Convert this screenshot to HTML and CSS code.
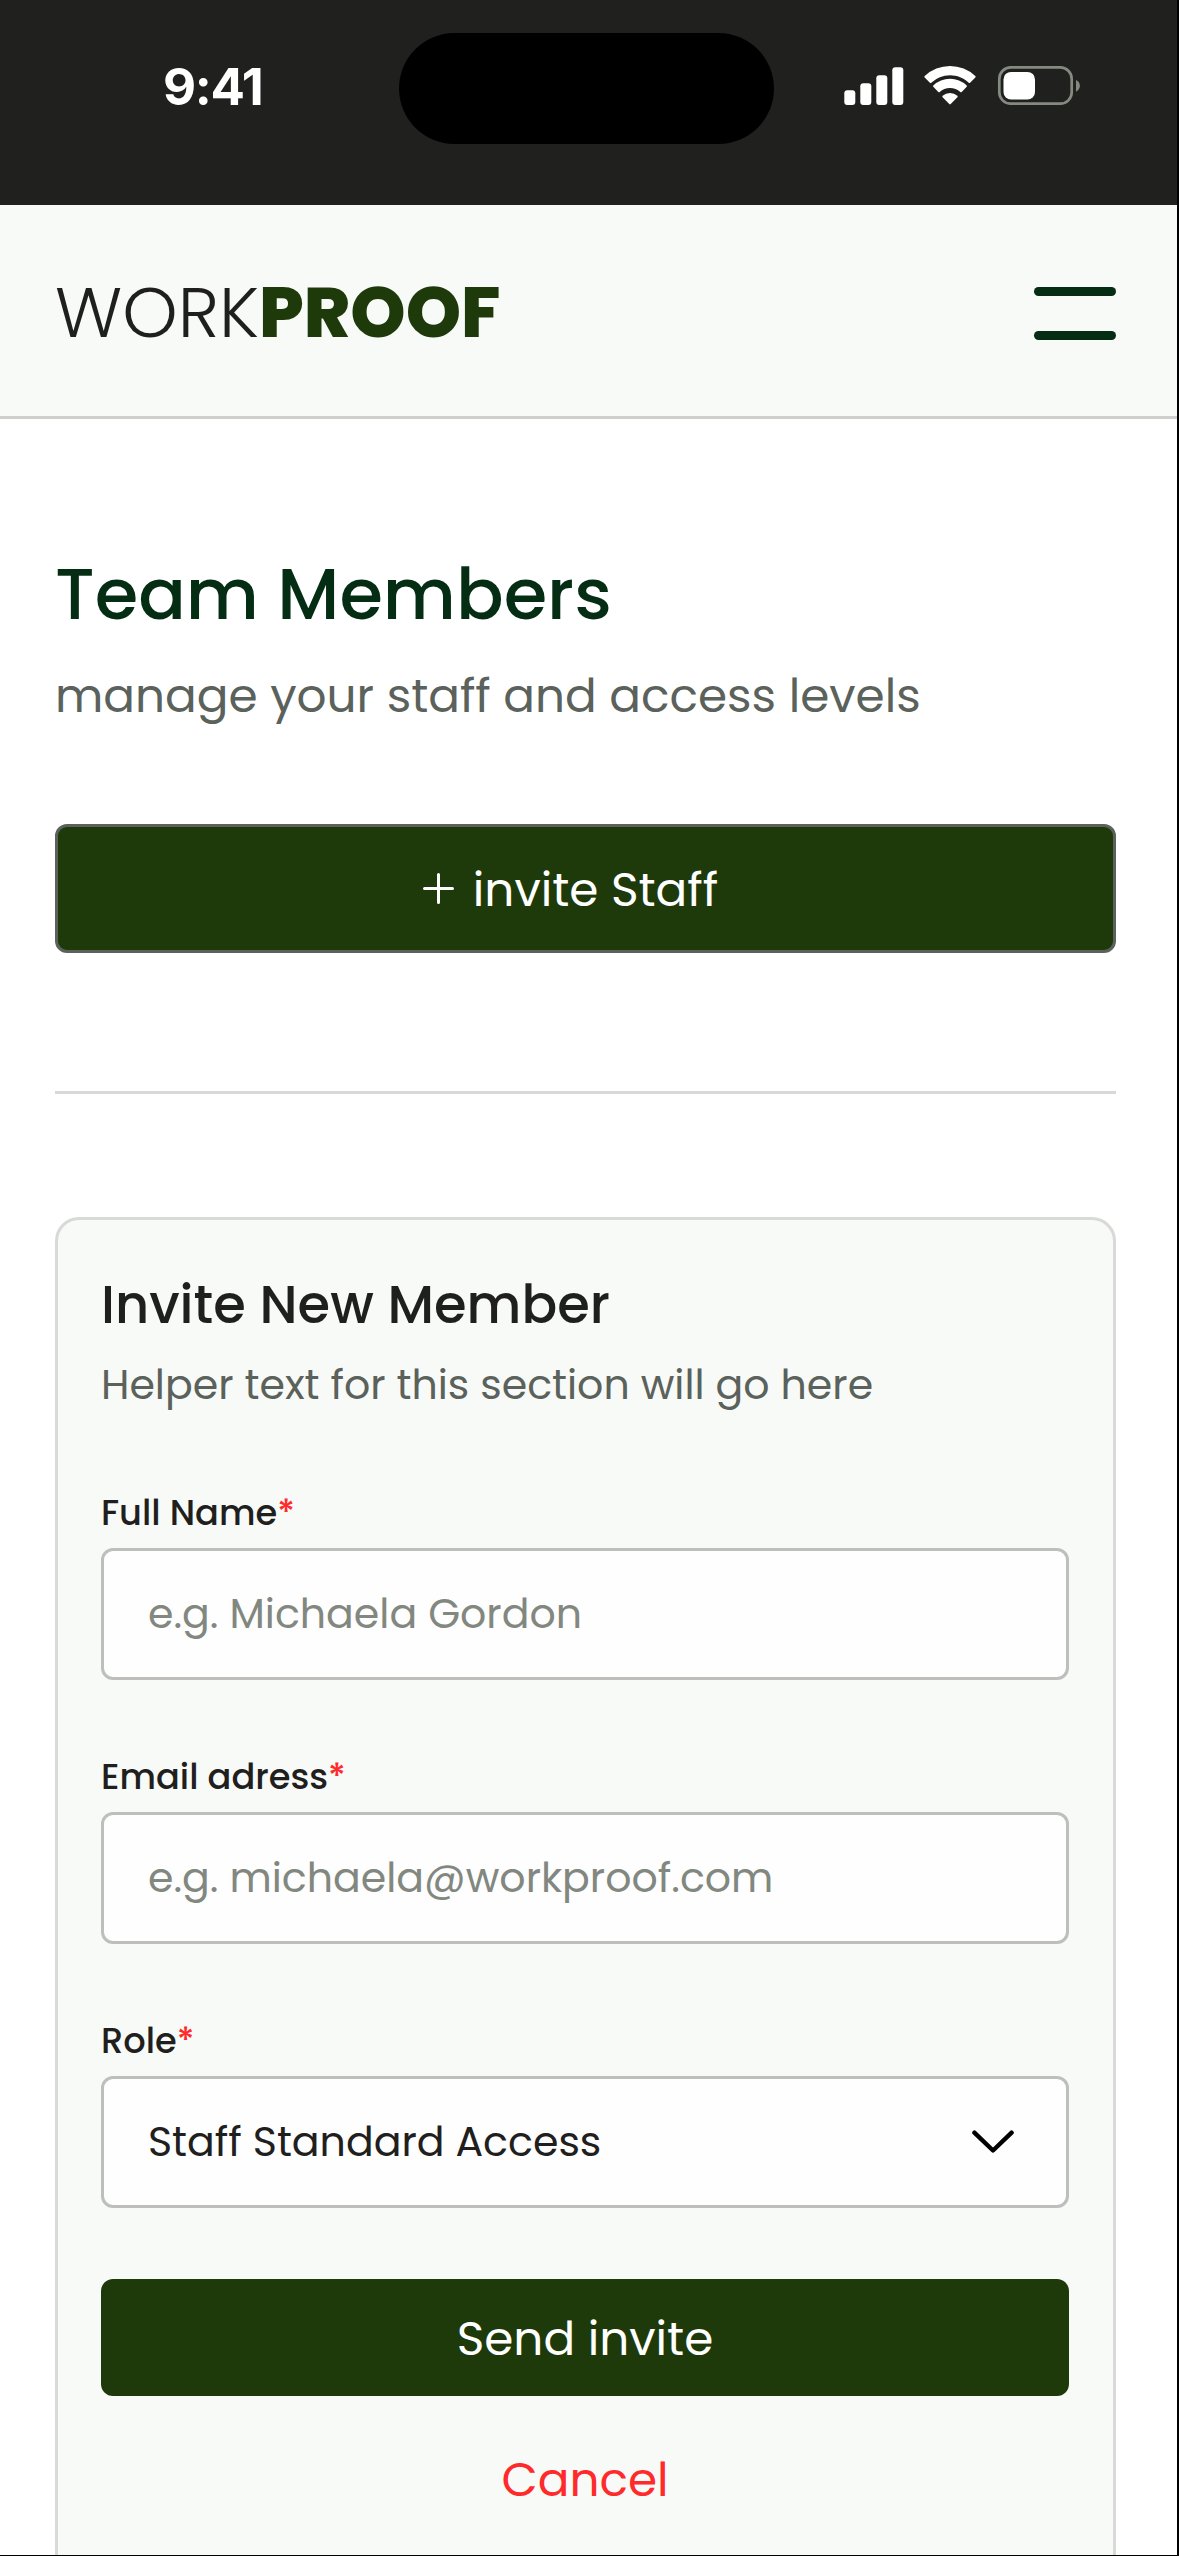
FILE: index.html
```
<!DOCTYPE html>
<html lang="en">
<head>
  <meta charset="utf-8">
  <title>WorkProof – Team Members</title>
  <link rel="stylesheet" href="styles.css">
</head>
<body>
  <div class="screen">
    <div class="status-bar">
      <span class="status-time">9:41</span>
      <span class="island"></span>
      <svg class="status-icons" width="240" height="44" viewBox="0 0 240 44" aria-hidden="true">
        <g fill="#fff">
          <rect x="4.3" y="26.3" width="11" height="14.7" rx="3"/>
          <rect x="20.3" y="19.3" width="11" height="21.7" rx="3"/>
          <rect x="36.3" y="11.3" width="11" height="29.7" rx="3"/>
          <rect x="52.3" y="3.3" width="11" height="37.7" rx="3"/>
          <path d="M110 11.3c7 0 13.7 2.7 18.7 7.5.4.4 1 .4 1.4 0l5.2-5.2c.4-.4.4-1.1 0-1.5a36.7 36.7 0 0 0-50.6 0c-.4.4-.4 1.1 0 1.5l5.2 5.2c.4.4 1 .4 1.4 0A27 27 0 0 1 110 11.3z"/>
          <path d="M110 24c3.9 0 7.5 1.4 10.3 4 .4.4 1 .4 1.4 0l5-5.2c.4-.4.4-1 0-1.4a24.3 24.3 0 0 0-33.4 0c-.4.4-.4 1 0 1.4l5 5.2c.4.4 1 .4 1.4 0A15 15 0 0 1 110 24z"/>
          <path d="M117.4 33.2c.4-.4.4-1.1 0-1.5a11.5 11.5 0 0 0-14.8 0c-.4.4-.4 1.1 0 1.5l6.7 6.9c.4.4 1 .4 1.4 0z"/>
          <rect x="163.5" y="7.9" width="31.5" height="27.5" rx="7.5"/>
        </g>
        <rect x="159.3" y="3.4" width="72.4" height="36.3" rx="11.5" fill="none" stroke="#858a81" stroke-width="2.7"/>
        <path d="M236 16v11.7c2.4-1 3.9-3.300 3.9-5.850S238.4 17 236 16z" fill="#858a81"/>
      </svg>
    </div>

    <header class="header">
      <div class="logo">WORK<b>PROOF</b></div>
      <div class="menu"><span></span><span></span></div>
    </header>

    <main class="content">
      <h1 class="title">Team Members</h1>
      <p class="subtitle">manage your staff and access levels</p>
      <button class="button button-outlined" type="button">
        <svg class="plus" width="31" height="31" viewBox="0 0 31 31" stroke="#fff" stroke-width="3" stroke-linecap="round" aria-hidden="true"><path d="M15.5 1.5v28M1.5 15.5h28"/></svg>
        invite Staff
      </button>
      <hr class="divider">

      <section class="card">
        <h2 class="card-title">Invite New Member</h2>
        <p class="card-help">Helper text for this section will go here</p>

        <div class="field">
          <div class="label">Full Name<span>*</span></div>
          <div class="input">e.g. Michaela Gordon</div>
        </div>
        <div class="field">
          <div class="label">Email adress<span>*</span></div>
          <div class="input">e.g. michaela@workproof.com</div>
        </div>
        <div class="field">
          <div class="label">Role<span>*</span></div>
          <div class="input input-filled">
            Staff Standard Access
            <svg class="chevron" width="42" height="24" viewBox="0 0 42 24" fill="none" stroke="#000" stroke-width="4.4" stroke-linecap="round" stroke-linejoin="round" aria-hidden="true"><path d="M2.4 2.7 21 20.5 39.6 2.7"/></svg>
          </div>
        </div>

        <button class="button button-send" type="button">Send invite</button>
        <div class="cancel">Cancel</div>
      </section>
    </main>
  </div>
</body>
</html>
```
FILE: styles.css
```
* {
  box-sizing: border-box;
  margin: 0;
}

body {
  font-family: Poppins, Inter, sans-serif;
  color: #1f201e;
  background: #000;
}

.screen {
  height: 2556px;
  overflow: hidden;
  background: #fff;
  border-right: 2px solid #000;
  border-bottom: 1px solid #000;
}

/* Status bar */
.status-bar {
  position: relative;
  display: flex;
  justify-content: space-between;
  height: 205px;
  padding: 64px 97px 0 163px;
  background: #20201e;
}

.status-time {
  font: 700 51px/46px Inter, sans-serif;
  letter-spacing: -1.3px;
  color: #fff;
}

.island {
  position: absolute;
  top: 33px;
  left: 399px;
  width: 375px;
  height: 111px;
  border-radius: 56px;
  background: #000;
}

/* Header */
.header {
  display: flex;
  justify-content: space-between;
  align-items: center;
  height: 214px;
  padding: 3px 61px 0 55px;
  background: #f8faf7;
  border-bottom: 3px solid #cdd0cb;
}

.logo {
  padding-top: 2px;
  font-size: 70.4px;
  font-weight: 300;
  line-height: 106px;
}

.logo b {
  font-weight: 800;
  color: #1e3a0a;
}

.menu {
  display: flex;
  flex-direction: column;
  gap: 35px;
  width: 82px;
  padding-top: 3px;
}

.menu span {
  height: 9px;
  border-radius: 5px;
  background: #052d14;
}

/* Page content */
.content {
  padding: 123px 61px 0 55px;
}

.title {
  font-size: 70.4px;
  font-weight: 500;
  line-height: 106px;
  color: #052d14;
}

.subtitle {
  margin: 13px 0 93px;
  font-size: 46.93px;
  line-height: 70px;
  color: #5b615b;
}

.button {
  display: flex;
  justify-content: center;
  align-items: center;
  width: 100%;
  border: 0;
  border-radius: 12px;
  font: 400 46.93px/70px Poppins, Inter, sans-serif;
  color: #fff;
  background: #1e3a0a;
}

.button-outlined {
  gap: 19px;
  height: 129px;
  padding: 3px 30px 0 0;
  border: 3px solid #5b615b;
}

.plus {
  margin-bottom: 3px;
}

.divider {
  height: 3px;
  margin: 138px 0 123px;
  border: 0;
  background: #d9d9d9;
}

/* Invite card */
.card {
  height: 1400px;
  padding: 45px 44px 0 43px;
  border: 3px solid #d8dad7;
  border-radius: 24px;
  background: #f8faf7;
}

.card-title {
  font-size: 52.8px;
  font-weight: 500;
  line-height: 79px;
}

.card-help {
  margin: 10px 0 70px;
  font-size: 41.07px;
  line-height: 62px;
  color: #5b615b;
}

.field {
  margin-bottom: 70px;
}

.label {
  height: 52px;
  margin-bottom: 10px;
  font-size: 35.2px;
  font-weight: 500;
  line-height: 54px;
}

.label span {
  color: #fe2a2b;
}

.input {
  display: flex;
  justify-content: space-between;
  align-items: center;
  height: 132px;
  padding: 0 52px 2px 44px;
  border: 3px solid #bcbfba;
  border-radius: 12px;
  font-size: 41.07px;
  color: #82877f;
  background: #fdfefd;
}

.input-filled {
  color: #1f201e;
}

.chevron {
  margin-top: 2px;
}

.button-send {
  height: 117px;
  margin-top: 71px;
  padding: 2px 0 0;
}

.cancel {
  margin-top: 49px;
  font-size: 46.93px;
  line-height: 70px;
  text-align: center;
  color: #fe2a2b;
}
```
